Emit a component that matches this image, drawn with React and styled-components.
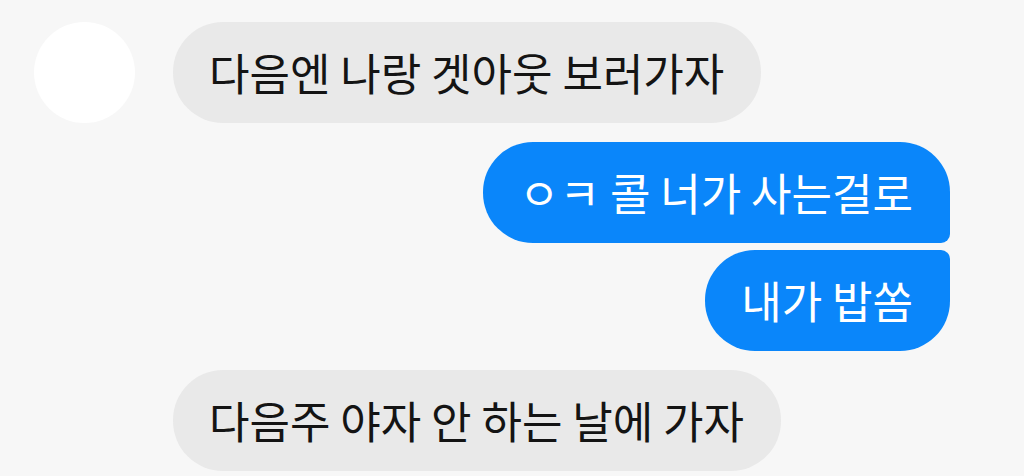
import React from "react";
import styled, { createGlobalStyle } from "styled-components";

const Global = createGlobalStyle`
  html, body {
    margin: 0;
    padding: 0;
    background: #f7f7f7;
  }
  body {
    font-family: "Noto Sans CJK KR", "Noto Sans", sans-serif;
  }
`;

const Thread = styled.div`
  width: 1024px;
  height: 476px;
  box-sizing: border-box;
  padding: 22px 74px 0 34px;
  display: flex;
  flex-direction: column;
  overflow: hidden;
`;

const Row = styled.div`
  display: flex;
  align-items: center;
  justify-content: ${(p) => (p.$mine ? "flex-end" : "flex-start")};
  gap: 38px;
  margin-top: ${(p) => p.$gap || 0}px;
`;

const Avatar = styled.div`
  width: 101px;
  height: 101px;
  flex: none;
  border-radius: 50%;
  background: ${(p) => (p.$hidden ? "transparent" : "#ffffff")};
`;

const Bubble = styled.div`
  height: 101px;
  box-sizing: border-box;
  padding: 0 37px 2px 36px;
  display: flex;
  align-items: center;
  font-size: 44px;
  font-weight: 400;
  letter-spacing: 0;
  white-space: nowrap;
  color: ${(p) => (p.$mine ? "#ffffff" : "#141414")};
  background: ${(p) => (p.$mine ? "#0a86fa" : "#e9e9e9")};
  border-radius: ${(p) => p.$radius || "50px"};
`;

export default function App() {
  return (
    <>
      <Global />
      <Thread>
        <Row>
          <Avatar />
          <Bubble>다음엔 나랑 겟아웃 보러가자</Bubble>
        </Row>
        <Row $mine $gap={19}>
          <Bubble $mine $radius="50px 50px 9px 50px">ㅇㅋ 콜 너가 사는걸로</Bubble>
        </Row>
        <Row $mine $gap={7}>
          <Bubble $mine $radius="50px 9px 50px 50px">내가 밥쏨</Bubble>
        </Row>
        <Row $gap={19}>
          <Avatar $hidden />
          <Bubble>다음주 야자 안 하는 날에 가자</Bubble>
        </Row>
      </Thread>
    </>
  );
}
